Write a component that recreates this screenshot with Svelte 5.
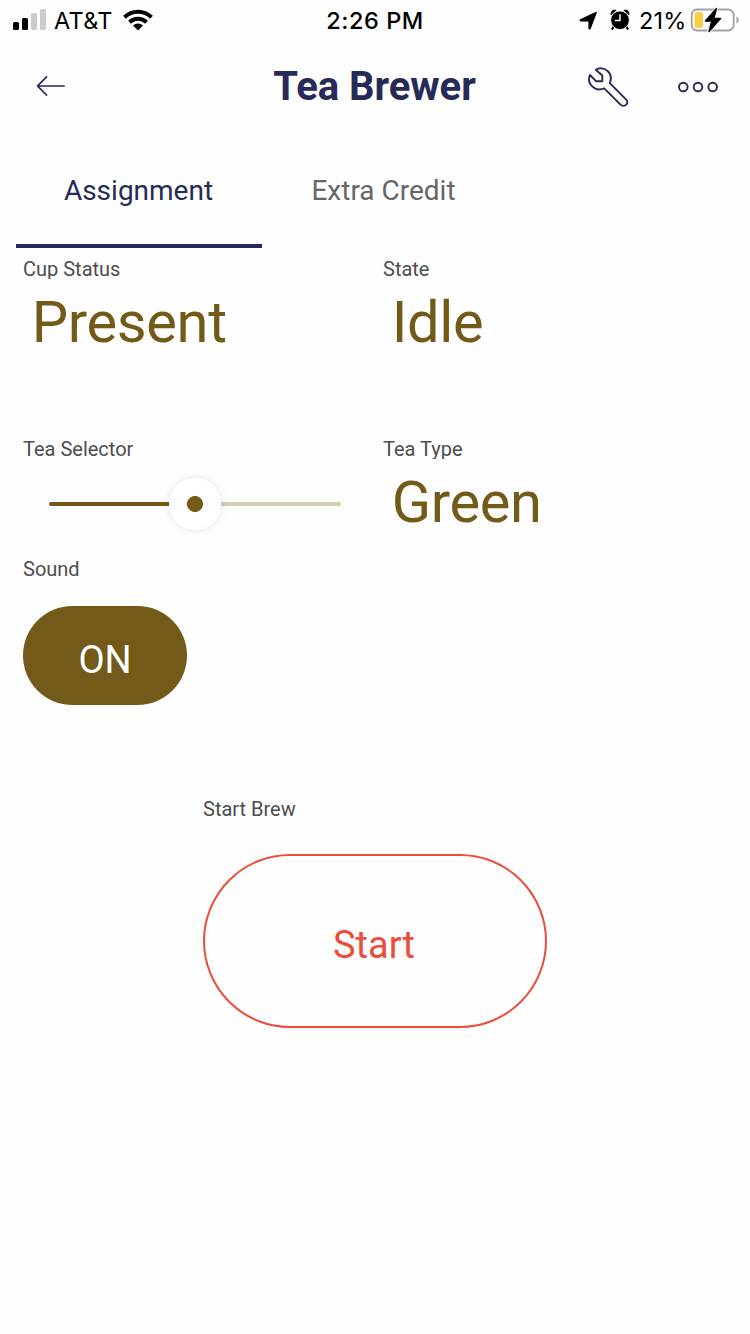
<script>
  let tab = $state('Assignment');
  let sound = $state(true);
  const position = 50;
</script>

<div class="screen">
  <div class="status">
    <div class="carrier">
      <svg class="signal" width="34" height="22" viewBox="0 0 34 22">
        <rect x="0" y="13" width="6" height="8" rx="1.6" />
        <rect x="9" y="9" width="6" height="12" rx="1.6" />
        <rect x="18" y="4" width="6" height="17" rx="1.6" fill="#cbcbcb" />
        <rect x="27" y="0" width="6" height="21" rx="1.6" fill="#cbcbcb" />
      </svg>
      <span class="network">AT&amp;T</span>
      <svg class="wifi" width="30" height="22" viewBox="0 0 30 22">
        <g fill="none" stroke="#000" stroke-width="4">
          <path d="M1.5 8.2A19.3 19.3 0 0 1 28.5 8.2" />
          <path d="M6.5 13.2A12.2 12.2 0 0 1 23.5 13.2" />
        </g>
        <path d="M10 16.6A7.2 7.2 0 0 1 20 16.6L15 21.6Z" />
      </svg>
    </div>
    <span class="time">2:26 PM</span>
    <div class="power">
      <svg class="location" width="20" height="20" viewBox="0 0 20 20">
        <path d="M17.2 1.8 11.2 17.4Q10.4 18.6 10 17.4V10H2Q.5 9.6 1.6 8.7L16.2 1.8Q17.4 1 17.2 1.8Z" stroke="#000" stroke-width="1.2" />
      </svg>
      <svg class="alarm" width="20" height="22" viewBox="0 0 20 22">
        <path d="M.8 6.2C-.4 2.8 3 -.4 6.6 1.3ZM19.2 6.2C20.4 2.8 17 -.4 13.4 1.3Z" />
        <path d="M4 17 2.4 19.8M16 17l1.6 2.8" stroke="#000" stroke-width="2.2" stroke-linecap="round" />
        <circle cx="10" cy="11.2" r="9.3" stroke="#fff" stroke-width=".8" />
        <path d="M10 5.2V11.5H5" fill="none" stroke="#fff" stroke-width="1.5" />
      </svg>
      <span class="percent">21%</span>
      <svg class="battery" width="50" height="26" viewBox="0 0 50 26">
        <rect x="1.7" y="2.5" width="42" height="21" rx="5.5" fill="#fff" stroke="#a0a0a0" stroke-width="1.8" />
        <path d="M46.5 9.2Q48.7 10.3 48.7 13T46.5 16.8Z" fill="#a0a0a0" />
        <rect x="4.5" y="5.3" width="8.5" height="15.5" rx="2.5" fill="#f7ce46" />
        <path d="M27 1 15.8 14.3H21.5L18.6 25 30.5 11.3H24Z" stroke="#fff" stroke-width="3" />
        <path d="M26.5 1.5 15.4 14H21.8L19 24.5 30.5 11.5H23.7Z" stroke="#000" stroke-width="1.4" stroke-linejoin="round" />
      </svg>
    </div>
  </div>

  <header>
    <button class="icon back" aria-label="Back">
      <svg width="32" height="24" viewBox="0 0 32 24" fill="none" stroke="#262a57" stroke-width="1.7">
        <path d="M29.8 12H2.8M12 2.3 2.6 12 12 21.7" />
      </svg>
    </button>
    <h1>Tea Brewer</h1>
    <div class="actions">
      <button class="icon wrench" aria-label="Settings">
        <svg width="44" height="44" viewBox="0 0 44 44" fill="none" stroke="#262a57" stroke-width="1.9" stroke-linejoin="round">
          <path d="M8.8 3.8C12 1.5 17.5 1.8 20.8 5.2C23.9 8.3 24.6 12.8 22.8 17.2L39.2 33.7C41.5 36 39.8 39.9 36.5 39.9C35.3 39.9 34.3 39.5 33.5 38.7L17.2 22.4C12.8 24.2 8.3 23.4 5.2 20.4C2.2 17.4 1.3 12.8 3 9L9.2 15.3H15.3V9.5Z" />
        </svg>
      </button>
      <button class="icon more" aria-label="More">
        <svg width="42" height="12" viewBox="0 0 42 12" fill="none" stroke="#262a57" stroke-width="1.9">
          <circle cx="6.3" cy="6" r="4.3" /><circle cx="21" cy="6" r="4.3" /><circle cx="35.7" cy="6" r="4.3" />
        </svg>
      </button>
    </div>
  </header>

  <nav>
    {#each ['Assignment', 'Extra Credit'] as name}
      <button class:active={tab === name} onclick={() => (tab = name)}>{name}</button>
    {/each}
  </nav>

  <main>
    <section class="cup">
      <h2>Cup Status</h2>
      <p>Present</p>
    </section>
    <section class="state">
      <h2>State</h2>
      <p>Idle</p>
    </section>
    <section class="selector">
      <h2>Tea Selector</h2>
      <div class="slider">
        <div class="fill" style="width: {position}%"></div>
        <div class="thumb" style="left: {position}%"></div>
      </div>
    </section>
    <section class="type">
      <h2>Tea Type</h2>
      <p>Green</p>
    </section>
    <section class="sound">
      <h2>Sound</h2>
      <button class="toggle" onclick={() => (sound = !sound)}>{sound ? 'ON' : 'OFF'}</button>
    </section>
    <section class="brew">
      <h2>Start Brew</h2>
      <button class="start">Start</button>
    </section>
  </main>
</div>

<style>
  :global(body) { margin: 0; background: #fefefe; }
  .screen { width: 750px; height: 1334px; overflow: hidden; background: #fefefe; font-family: Roboto, sans-serif; color: #262a57; }
  button { border: 0; padding: 0; margin: 0; background: none; font: inherit; color: inherit; }
  svg { display: block; flex: none; }
  h1, h2, p { margin: 0; font-weight: 400; }

  .status { display: grid; grid-template-columns: 1fr auto 1fr; height: 40px; align-items: center; font: 23.5px/42px Inter, sans-serif; color: #000; white-space: nowrap; }
  .carrier { display: flex; align-items: center; padding-left: 13px; }
  .signal { margin-top: -3px; }
  .network { width: 59px; margin-left: 7px; letter-spacing: 0.3px; }
  .wifi { margin: -2px 0 0 10px; }
  .time { font-weight: 500; letter-spacing: 0.55px; }
  .power { display: flex; align-items: center; justify-content: flex-end; padding-right: 10px; }
  .alarm { margin: -2px 0 0 11px; }
  .percent { margin-left: 9px; width: 47px; letter-spacing: 0.2px; }
  .battery { margin: -2px 0 0 4px; }

  header { display: grid; grid-template-columns: 1fr auto 1fr; align-items: center; height: 93px; }
  .back { margin: -1px 0 0 35px; justify-self: start; }
  h1 { font-size: 40px; line-height: 48px; font-weight: 700; letter-spacing: -0.05px; padding-right: 1px; }
  .actions { display: flex; align-items: center; justify-content: flex-end; gap: 46px; padding-right: 31px; }
  .wrench { margin-top: 2px; }

  nav { display: flex; height: 115px; padding-left: 16px; box-sizing: border-box; }
  nav button { width: 246px; height: 115px; box-sizing: border-box; padding: 4px 3px 0 0; border-bottom: 4px solid transparent; font-size: 28px; line-height: 107px; color: #666; }
  nav .active { padding-right: 1px; color: #262a57; border-color: #262a57; }

  main { display: grid; grid-template-columns: repeat(4, 180px); grid-template-rows: 180px 120px 240px 250px; padding: 3px 15px 0; }
  section { padding: 8px; grid-column: span 2; }
  .brew { grid-column: 2 / span 2; }
  .sound { grid-column: 1 / span 4; }
  h2 { height: 20px; overflow: hidden; font-size: 20px; line-height: 20px; color: #4d4d4d; }
  p { margin-top: 9px; padding-left: 8.7px; font-size: 57.8px; line-height: 68px; letter-spacing: -0.35px; color: #735a19; }
  .slider { position: relative; width: 292px; height: 4px; margin: 43px 0 0 26px; border-radius: 2px; background: #d5ccb4; }
  .fill { height: 4px; border-radius: 2px; background: #735a19; }
  .thumb { position: absolute; top: 50%; width: 52px; height: 52px; border-radius: 50%; transform: translate(-50%, -50%); background: radial-gradient(circle, #735a19 7.6px, #fff 8.4px); box-shadow: 0 0 8px rgba(30, 60, 50, 0.14); }
  .toggle { display: block; width: 164px; height: 99px; margin-top: 27.4px; padding-top: 9px; border-radius: 50px; background: #735a19; color: #fff; font-size: 38px; letter-spacing: -0.2px; }
  .start { display: block; box-sizing: border-box; width: 344px; height: 174px; margin-top: 35px; padding: 7px 2px 0 0; border: 2px solid #eb4d3d; border-radius: 87px; color: #eb4d3d; font-size: 38px; }
</style>
